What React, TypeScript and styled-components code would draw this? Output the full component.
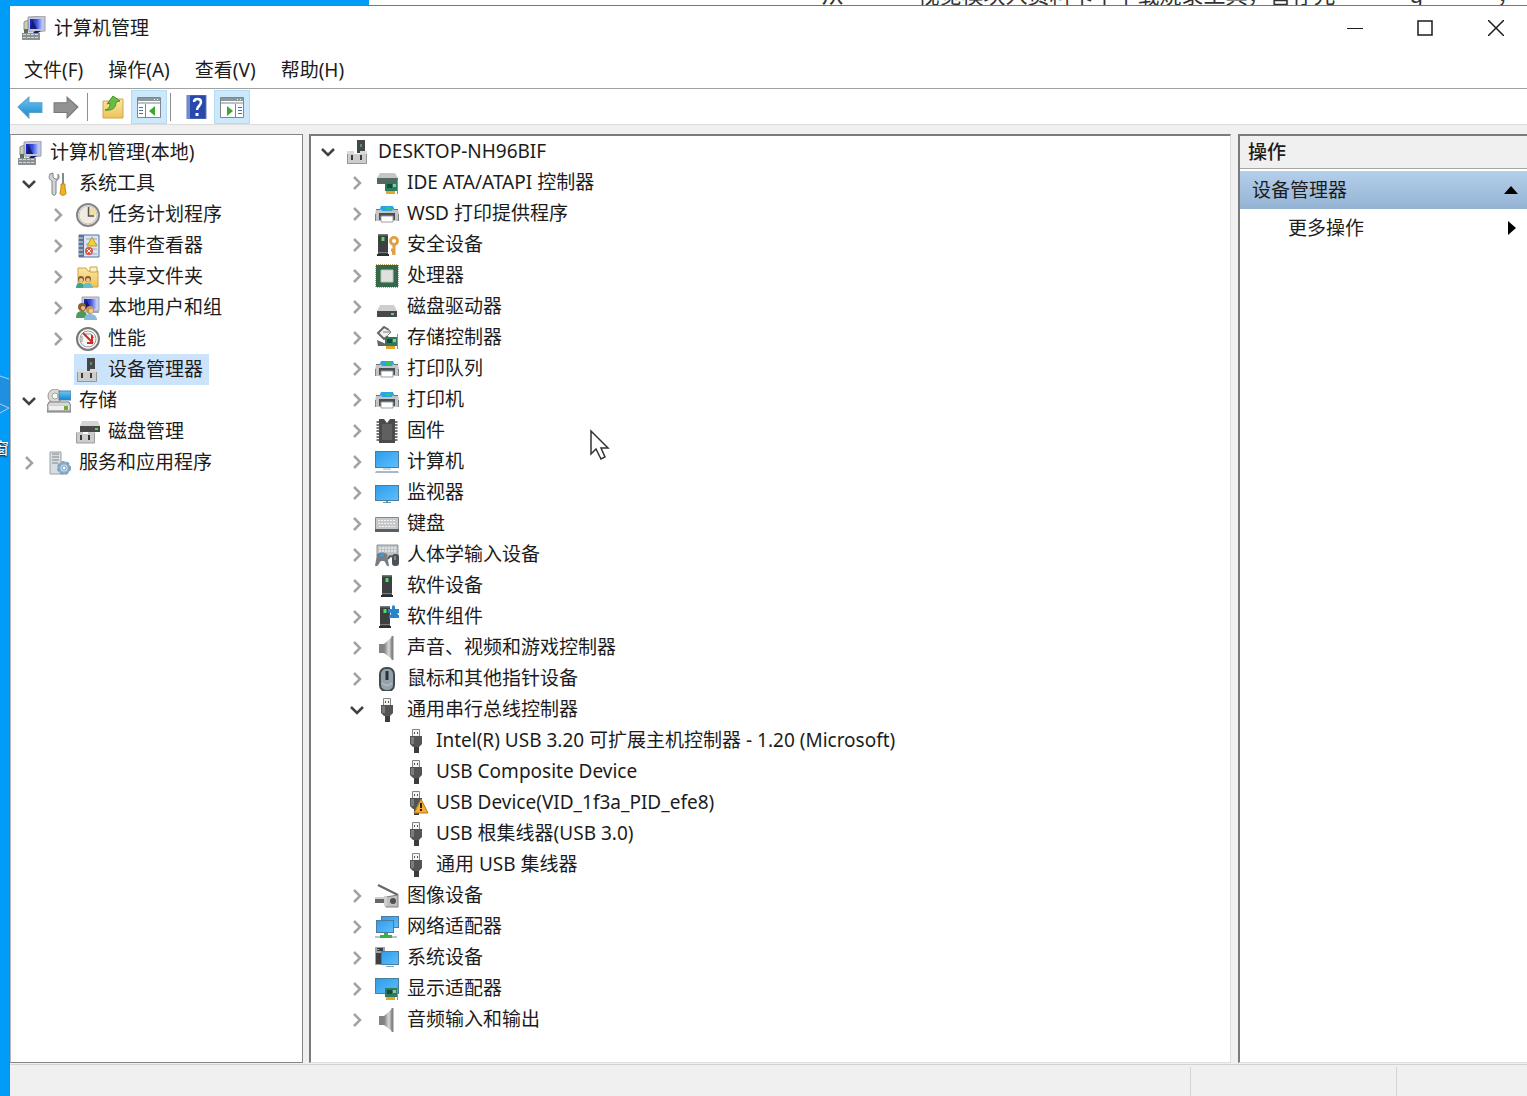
import React, { useState } from "react";
import styled, { createGlobalStyle } from "styled-components";

const GlobalStyle = createGlobalStyle`
  * { box-sizing: border-box; }
  body {
    margin: 0;
    background: #009cf8;
    color: #1c1c1c;
    font: 19px/31px "Noto Sans", "Noto Sans CJK SC", sans-serif;
  }
  button { font: inherit; color: inherit; border: 0; background: none; padding: 0; margin: 0; }
  ul { list-style: none; margin: 0; padding: 0; }
`;

/* ---------- icons ---------- */

const Svg = ({ size = 24, children }: { size?: number; children: React.ReactNode }) => (
  <svg width={size} height={size} viewBox="0 0 24 24" fill="none" aria-hidden="true">
    {children}
  </svg>
);

const HiddenDefs = styled.svg`
  position: absolute;
`;

const Gradients = () => (
  <HiddenDefs width="0" height="0" aria-hidden="true">
    <defs>
      <linearGradient id="screen" x1="0" y1="0" x2="1" y2="1">
        <stop offset="0" stopColor="#2f9be8" />
        <stop offset="1" stopColor="#5cc0ff" />
      </linearGradient>
      <linearGradient id="royal" x1="0" y1="0" x2="1" y2="0">
        <stop offset="0" stopColor="#1420b8" />
        <stop offset="0.5" stopColor="#3c4ee0" />
        <stop offset="1" stopColor="#c4d4ff" />
      </linearGradient>
      <linearGradient id="steel" x1="0" y1="0" x2="1" y2="0">
        <stop offset="0" stopColor="#7d7d7d" />
        <stop offset="0.6" stopColor="#d8d8d8" />
        <stop offset="1" stopColor="#8a8a8a" />
      </linearGradient>
      <linearGradient id="lid" x1="0" y1="0" x2="0" y2="1">
        <stop offset="0" stopColor="#e4e4e4" />
        <stop offset="1" stopColor="#a9a9a9" />
      </linearGradient>
      <linearGradient id="folder" x1="0" y1="0" x2="0" y2="1">
        <stop offset="0" stopColor="#fbe6a2" />
        <stop offset="1" stopColor="#edc35a" />
      </linearGradient>
      <linearGradient id="sky" x1="0" y1="0" x2="0" y2="1">
        <stop offset="0" stopColor="#6cc7f4" />
        <stop offset="1" stopColor="#1586cf" />
      </linearGradient>
    </defs>
  </HiddenDefs>
);

const Card = () => (
  <>
    <path d="M10 11h12v9H10z" fill="#2f7a5c" />
    <path d="M12 13h5v4h-5z" fill="#1b4a38" />
    <path d="M18 13h3v3h-3z" fill="#7fc9a4" />
    <path d="M11 20h9v3h-9z" fill="#e2a62b" />
    <path d="M22.500 8v15" stroke="#8d8d8d" strokeWidth="1" />
  </>
);

const Tower = ({ x = 7 }: { x?: number }) => (
  <g transform={`translate(${x} 0)`}>
    <path d="M1 1h10v20H1z" fill="#3d3f40" />
    <path d="M1 1h10v1.500H1z" fill="#75787a" />
    <path d="M4.500 4h3v4h-3z" fill="#4be060" />
    <path d="M0 21h12v2H0z" fill="#2c2d2e" />
    <path d="M1 19.500h10" stroke="#7a7a7a" />
  </g>
);

const Ports = () => (
  <>
    <path d="M1 14h20v10H1z" fill="#cdcdcd" />
    <path d="M1 11h7v3H1zM14 11h7v3h-7z" fill="#dadada" />
    <path d="M1.500 14v9.500h19V14" stroke="#979797" />
    <path d="M5 15h2v5H5zM14 15h2v5h-2z" fill="#3a3a3a" />
  </>
);

const Monitor = ({ x = 0, y = 3, w = 24, h = 15 }: { x?: number; y?: number; w?: number; h?: number }) => (
  <rect x={x + 0.5} y={y + 0.5} width={w - 1} height={h - 1} fill="url(#screen)" stroke="#4d7c9d" />
);

const Users = () => (
  <>
    <circle cx="6" cy="11" r="4" fill="#8d6231" />
    <circle cx="7" cy="12" r="2" fill="#e9c08d" />
    <path d="M0 22c0-5 2-7 6-7s5 2 5 7z" fill="#4d9b5c" />
    <circle cx="14" cy="14" r="4" fill="#c9954f" />
    <circle cx="15" cy="15" r="2" fill="#f2d0a0" />
    <path d="M8 24c0-4 2-6 6-6s7 2 7 6z" fill="#8db9dc" />
  </>
);

const icons: Record<string, React.ReactNode> = {
  manage: (
    <>
      <path d="M2 6l4-2v10H2z" fill="#cfcfc0" stroke="#8d8d80" />
      <path d="M6 1l17-1v15l-16 1z" fill="#c3c6d6" stroke="#9b9fb0" strokeWidth="1" />
      <path d="M8 3h13v10H8z" fill="url(#royal)" />
      <path d="M10 3l5 10H9zM13 15h6l-3 2h-5z" fill="#141c6c" />
      <path d="M0 17h18v7H0z" fill="#8c9294" />
      <path d="M1 18.500h16M1 21.500h16" stroke="#d2d6d8" strokeDasharray="3 1" />
      <path d="M2 13h4v4H2z" fill="#59705b" />
    </>
  ),
  tools: (
    <>
      <path d="M3 2c-2 4 0 6 2 7v12c0 3 4 3 4 0V9c3-1 4-5 2-7v5H8L6 5V1z" fill="#cfd3d6" stroke="#7f8487" />
      <path d="M16 1v12" stroke="#85898c" strokeWidth="2" />
      <path d="M14 12h4v4l1 5c0 3-6 3-6 0l1-5z" fill="#f3b320" stroke="#c08a1a" strokeWidth="1" />
    </>
  ),
  clock: (
    <>
      <circle cx="12" cy="12" r="11" fill="#f1ecdf" stroke="#858585" strokeWidth="2" />
      <circle cx="12" cy="12" r="9" stroke="#c6c6c6" strokeWidth="1" />
      <path d="M12 12V4a8 8 0 0 1 8 8z" fill="#f2dda4" />
      <path d="M12.500 4v9H18" stroke="#54575a" strokeWidth="1.500" />
    </>
  ),
  events: (
    <>
      <path d="M3 1h20v22H3z" fill="#d8e5f4" stroke="#55709b" />
      <path d="M3 1h5v22H3z" fill="#5d7291" />
      <path d="M2 4h5M2 8h5M2 12h5M2 16h5M2 20h5" stroke="#d9dfe7" />
      <path d="M10 5h11M10 10h11M10 15h11M10 20h11" stroke="#93acd0" />
      <path d="M16 3l5 9H11z" fill="#f0cf3b" stroke="#c49c1a" />
      <circle cx="13" cy="17" r="4" fill="#df5547" />
      <path d="M11 15l4 4m0-4l-4 4" stroke="#fff" />
    </>
  ),
  share: (
    <>
      <path d="M2 3h8l2 3h10v16H2z" fill="url(#folder)" stroke="#cba248" />
      <path d="M14 2h7v5h-7z" fill="#fff3c5" stroke="#cba248" />
      <circle cx="5" cy="14" r="3" fill="#7e5a2f" />
      <circle cx="12" cy="14" r="3" fill="#7e5a2f" />
      <circle cx="5" cy="15" r="2" fill="#efc597" />
      <circle cx="12" cy="15" r="2" fill="#efc597" />
      <path d="M0 23c0-4 2-5 4-5s4 1 5 5z" fill="#3da58b" />
      <path d="M7 23c0-4 2-5 5-5s4 1 5 5z" fill="#68bdc7" />
    </>
  ),
  users: (
    <>
      <path d="M6 1h17v14H6z" fill="#c9cddd" stroke="#9fa4b7" />
      <path d="M8 3h13v10H8z" fill="url(#royal)" />
      <path d="M10 3l5 10H9z" fill="#141c6c" />
      <path d="M14 15h9v2h-9z" fill="#a7a7b1" />
      <Users />
    </>
  ),
  perf: (
    <>
      <circle cx="12" cy="12" r="11" fill="#f6f6f6" stroke="#777" strokeWidth="2" />
      <circle cx="12" cy="12" r="8" stroke="#9c9c9c" strokeWidth="1" />
      <path d="M6 15V9M9 7h6l3 4" stroke="#8a9296" strokeWidth="1" />
      <path d="M7 6l10 10M16 8v8h-5" stroke="#d12a20" strokeWidth="2" />
    </>
  ),
  device: (
    <>
      <path d="M11 0h8v13h-8z" fill="#454748" />
      <path d="M14 4h2v3h-2z" fill="#618b72" />
      <Ports />
    </>
  ),
  storage: (
    <>
      <circle cx="8" cy="7" r="7" fill="#d9d9d3" stroke="#98988f" />
      <circle cx="8" cy="7" r="3" fill="#f7f7f7" stroke="#a5a5a5" />
      <path d="M12 2h12v9H12z" fill="url(#sky)" stroke="#59839b" />
      <path d="M2 13h20l2 4v6H0v-6z" fill="url(#lid)" stroke="#777" />
      <path d="M2 17h20v4H2z" fill="#efefef" />
      <path d="M17 17h4v4h-4z" fill="#6fad32" />
    </>
  ),
  disk: (
    <>
      <path d="M6 1h16l2 5H4z" fill="#d4d4d4" />
      <path d="M4 6h20v6H4z" fill="#464849" />
      <path d="M19 8h3v2h-3z" fill="#4fcd67" />
      <path d="M0 12h7v2h5v-2h7v11H0z" fill="#cccccc" />
      <path d="M.5 13v10h18V13" stroke="#9d9d9d" />
      <path d="M4 15h2v5H4zM12 15h2v5h-2z" fill="#3a3a3a" />
    </>
  ),
  services: (
    <>
      <path d="M3 1h11v22H3z" fill="#d7dde0" stroke="#9aa3a8" />
      <path d="M5 3h7M5 6h7M5 9h7M5 12h6" stroke="#7e888e" strokeWidth="1" />
      <circle cx="17" cy="17" r="5" fill="#c8dbea" stroke="#8fadc6" strokeWidth="3" />
      <circle cx="17" cy="17" r="6" stroke="#7d9fbb" strokeWidth="2" strokeDasharray="3 2" />
      <circle cx="17" cy="17" r="2" fill="#fff" stroke="#7d9fbb" />
    </>
  ),
  ide: (
    <>
      <path d="M5 2h15l3 5H2z" fill="#c6c6c6" />
      <path d="M2 7h21v6H2z" fill="#566660" />
      <Card />
    </>
  ),
  printer: (
    <>
      <path d="M6 4h12l2 5H4z" fill="#29a4e8" />
      <path d="M11 5h5v3h-5z" fill="#35c271" />
      <path d="M1 7h5l1 2h10l1-2h5l1 6v6H0v-6z" fill="#c3c6c8" />
      <path d="M1 7.500h4.500m13 0H23" stroke="#6d7173" />
      <path d="M.5 12v7M23.500 12v7" stroke="#7e8284" />
      <path d="M4 11h16v7h-2v-4H6v4H4z" fill="#4b4f51" />
      <path d="M6 14h12v6H6z" fill="#fff" stroke="#9b9fa1" />
    </>
  ),
  security: (
    <>
      <Tower x={2} />
      <circle cx="19" cy="8" r="3.500" stroke="#e0a044" strokeWidth="3" />
      <path d="M19 11v11m0-5h-3m3 3h-2" stroke="#e0a044" strokeWidth="3" />
    </>
  ),
  cpu: (
    <>
      <path d="M1 1h22v22H1z" stroke="#b3a765" strokeWidth="2" strokeDasharray="1 1" />
      <path d="M1 1h22v22H1z" fill="#346849" />
      <path d="M6 6h12v12H6z" fill="#dfe1df" stroke="#b5c7bb" />
    </>
  ),
  drive: (
    <>
      <path d="M5 10h14l3 6H2z" fill="#cfcfcf" />
      <path d="M2 16h20v6H2z" fill="#48494a" />
      <path d="M16 18h3v2h-3z" fill="#58dc65" />
    </>
  ),
  controller: (
    <>
      <path d="M14 4L9 1 3 7l6 6 4-3" fill="#f1f1f1" stroke="#656565" strokeWidth="2" />
      <path d="M8 6h8l-3-3m3 3l-3 3" stroke="#777" />
      <path d="M2 14l9 4v2H3z" fill="#656565" />
      <Card />
    </>
  ),
  firmware: (
    <>
      <path d="M3 2v20M21 2v20" stroke="#777" strokeWidth="3" strokeDasharray="2 1" />
      <path d="M4 0h5l3 4 3-4h5v24H4z" fill="#4b4b4b" />
      <path d="M7 5h10v16H7z" fill="#606060" />
    </>
  ),
  computer: (
    <>
      <Monitor y={1} h={17} />
      <path d="M8 19h8" stroke="#8fb5ca" />
      <path d="M1 21h22l1 2H0z" fill="#aeb5c7" />
    </>
  ),
  monitor: (
    <>
      <Monitor y={4} h={16} />
      <path d="M11 20h2v1h3v1H8v-1h3z" fill="#5d98b5" />
    </>
  ),
  keyboard: (
    <>
      <path d="M.5 5.500h23v13H.5z" fill="#c5c9cc" stroke="#888" />
      <path d="M3 8.500h18M3 11.500h18M4 14.500h16" stroke="#f3f3f3" strokeWidth="1" strokeDasharray="2 1" />
      <path d="M0 17h24v3H0z" fill="#5b5f62" />
    </>
  ),
  hid: (
    <>
      <path d="M2 2h21v11H2z" fill="#bfc3c6" stroke="#909497" />
      <path d="M4 5h17M4 8h17" stroke="#fff" strokeWidth="1" strokeDasharray="2 1" />
      <path d="M2 11c4-2 6-2 10 0l2 12c-3 1-3-4-5-5H6c-2 1-2 6-6 5z" fill="#777d82" />
      <circle cx="7" cy="12" r="2" fill="#3d9be0" />
      <rect x="17" y="11" width="7" height="12" rx="3" fill="#4d5154" />
      <path d="M20 13v4" stroke="#b8bcc0" />
      <path d="M13 16c2-4 3-3 5-2" stroke="#55595c" strokeWidth="2" />
    </>
  ),
  software: <Tower x={6} />,
  component: (
    <>
      <Tower x={4} />
      <path d="M13 4h4c-1-5 4-5 3 0h4v4c-2 0-2 2 0 2v3H14v-3c3 0 3-3-1-2z" fill="#2a84cc" />
    </>
  ),
  speaker: (
    <>
      <path d="M4 8h5v9H4z" fill="#828282" />
      <path d="M9 8l8-7v22l-8-6z" fill="url(#steel)" />
      <path d="M17.500 0v24" stroke="#838383" strokeWidth="2" />
    </>
  ),
  mouse: (
    <>
      <rect x="5" y="1" width="14" height="23" rx="6" fill="#96a2aa" stroke="#444b50" strokeWidth="2" />
      <path d="M12 4v9" stroke="#263039" strokeWidth="3" />
      <path d="M7 16c3 3 7 3 10 0" stroke="#c5cfd5" />
    </>
  ),
  usb: (
    <>
      <path d="M8.500 .5h7v7h-7z" fill="#f4f4f4" stroke="#858585" />
      <path d="M10 3h1v2h-1zM13 3h1v2h-1z" fill="#555" />
      <path d="M6 7h12v8l-3 3H9l-3-3z" fill="#535455" />
      <path d="M7 8h3v7H7z" fill="#7b7c7d" />
      <path d="M10 18h5v6h-5z" fill="#3c3c3c" />
    </>
  ),
  imaging: (
    <>
      <path d="M3 1l20 10" stroke="#666" strokeWidth="2" />
      <path d="M11 13l12-2v12H11z" fill="#c0c0c0" stroke="#808080" />
      <circle cx="18" cy="17" r="3" fill="#505050" />
      <path d="M0 15h9v4H0z" fill="#666" />
      <path d="M0 13h9v2H0zM9 12h3v10H9z" fill="#cfcfcf" />
    </>
  ),
  network: (
    <>
      <Monitor x={6} y={1} w={18} h={12} />
      <Monitor x={1} y={5} w={18} h={13} />
      <path d="M9 18h4v2h4v3H5v-3h4z" fill="#35b34a" />
      <path d="M0 21h5v2H0zM17 21h5v2h-5z" fill="#c0c0c0" />
    </>
  ),
  system: (
    <>
      <path d="M0 1h10v18H0z" fill="#a0a4a6" />
      <path d="M2 2h6v3H2zM1 7h6v11H1z" fill="#3d4143" />
      <path d="M2 3h2v1H2z" fill="#61d674" />
      <Monitor x={6} y={5} w={18} h={14} />
      <path d="M11 20h8v1h-8z" fill="#70aac8" />
    </>
  ),
  display: (
    <>
      <Monitor y={1} h={16} />
      <Card />
    </>
  ),
  back: <path d="M1 12L11 3v5h12v9H11v5z" fill="url(#sky)" stroke="#5c9fc8" />,
  forward: <path d="M23 12L13 3v5H1v9h12v5z" fill="#929292" stroke="#787878" />,
  up: (
    <>
      <path d="M2 6h8l2-2h10v19H2z" fill="url(#folder)" stroke="#cfa64e" />
      <path d="M4 15C9 14 9 10 9 8L6 9l6-8 7 5-4 1c0 6-4 9-11 8z" fill="#69bd43" stroke="#45912a" />
    </>
  ),
  help: (
    <>
      <path d="M3 0h19v24H3z" fill="#2748ad" stroke="#687baf" />
      <path d="M3 0h3v24H3z" fill="#7089d3" />
      <path d="M10 7c0-4 7-4 7 0 0 4-4 4-4 8" stroke="#fff" strokeWidth="2.500" />
      <path d="M11.500 18h3v3h-3z" fill="#fff" />
    </>
  ),
};

const WindowPane = ({ flipped = false }: { flipped?: boolean }) => (
  <Svg>
    <path d="M.5 2.500h23v20H.5z" fill="#fff" stroke="#7d878e" />
    <path d="M1 3h22v3H1z" fill="#8c979e" />
    <path d="M17 4h1v1h-1zM20 4h1v1h-1z" fill="#fff" />
    <path d="M1 8h22" stroke="#b9c2c8" strokeWidth="2" />
    {flipped ? (
      <>
        <path d="M15.500 9v13" stroke="#7d878e" />
        <path d="M18 12.500h4M18 15.500h4M18 18.500h4" stroke="#4a7198" />
        <path d="M7 11l6 5-6 5z" fill="#3fa535" />
      </>
    ) : (
      <>
        <path d="M8.500 9v13" stroke="#7d878e" />
        <path d="M2 12.500h4M2 15.500h4M2 18.500h4" stroke="#4a7198" />
        <path d="M18 11l-6 5 6 5z" fill="#3fa535" />
      </>
    )}
  </Svg>
);

const Warning = () => (
  <svg width="16" height="16" viewBox="0 0 16 16" aria-hidden="true">
    <path d="M8 1l7 14H1z" fill="#f0ac35" stroke="#ba7a1b" />
    <path d="M7 5h2v5H7zM7 11h2v2H7z" fill="#2d220c" />
  </svg>
);

/* ---------- desktop and window frame ---------- */

const Desktop = styled.div`
  position: relative;
  display: flex;
  flex-direction: column;
  min-height: 100vh;
  padding-left: 9px;
  background: #009cf8;
  overflow: hidden;
`;

const Shortcut = styled.div`
  position: absolute;
  left: 0;
  top: 372px;
  display: flex;
  flex-direction: column;
  align-items: flex-end;
  gap: 20px;
  width: 9px;
  overflow: hidden;
  color: #fff;
  font-size: 16px;
  line-height: 24px;
  text-shadow: 0 1px 2px #000;
`;

const Behind = styled.div`
  display: flex;
  justify-content: flex-end;
  height: 5px;
  overflow: hidden;
`;

const BehindPage = styled.div`
  display: flex;
  align-items: flex-end;
  justify-content: flex-end;
  gap: 74px;
  width: calc(100% - 360px);
  padding-right: 8px;
  background: #fff;
  color: #333;
  font-size: 22px;
  line-height: 22px;
  white-space: nowrap;
`;

const Win = styled.main`
  flex: 1;
  display: flex;
  flex-direction: column;
  border-top: 1px solid #6f7a80;
  border-left: 1px solid #4a7ea3;
  background: #fff;
`;

const TitleBar = styled.header`
  display: flex;
  align-items: center;
  height: 44px;
  padding-left: 12px;
`;

const Title = styled.h1`
  flex: 1;
  margin: 0 0 0 8px;
  font-size: 19px;
  font-weight: 400;
`;

const CaptionButton = styled.button`
  display: grid;
  place-items: center;
  width: 70px;
  height: 44px;
  &:last-child { width: 72px; margin-right: -5px; }
`;

const MenuBar = styled.nav`
  display: flex;
  align-items: center;
  gap: 25px;
  height: 39px;
  padding: 2px 0 0 14px;
  border-bottom: 1px solid #a2a2a2;
`;

const Toolbar = styled.div`
  display: flex;
  align-items: center;
  height: 36px;
  padding: 1px 0 0 2px;
  border-bottom: 1px solid #dcdcdc;
`;

const ToolButton = styled.button<{ $on?: boolean }>`
  display: grid;
  place-items: center;
  width: 36px;
  height: 34px;
  background: ${(p) => (p.$on ? "#cce8fb" : "transparent")};
  border: 1px solid ${(p) => (p.$on ? "#b4dcf5" : "transparent")};
`;

const Divider = styled.span`
  width: 1px;
  height: 28px;
  margin: 0 7px 0 3px;
  background: #8f8f8f;
`;

const Workspace = styled.div`
  flex: 1;
  display: grid;
  grid-template-columns: 293px minmax(0, 1fr) 289px;
  gap: 6px;
  padding: 9px 0 1px;
  background: #f0f0f0;
`;

const NavPane = styled.aside`
  border: 1px solid #858585;
  border-left-color: #b5b5b5;
  background: #fff;
  padding: 2px 0;
`;

const DevicePane = styled.section`
  position: relative;
  border: 2px solid #7a7a7a;
  border-right: 1px solid #dedede;
  border-bottom: 1px solid #dedede;
  background: #fff;
  margin-right: 1px;
`;

const ActionPane = styled.aside`
  border: 2px solid #7a7a7a;
  border-right: 0;
  border-bottom: 1px solid #dedede;
  background: #fff;
`;

const Pointer = styled.svg`
  position: absolute;
  left: 279px;
  top: 293px;
`;

/* ---------- trees ---------- */

const Row = styled.div<{ $indent: number }>`
  display: flex;
  align-items: center;
  height: 31px;
  padding-left: ${(p) => p.$indent}px;
`;

const Expander = styled.button`
  display: grid;
  place-items: center;
  width: 20px;
  height: 31px;
  margin-right: 6px;
`;

const NoExpander = styled.span`
  width: 26px;
`;

const Label = styled.button<{ $selected?: boolean }>`
  position: relative;
  display: flex;
  align-items: center;
  gap: 8px;
  height: 31px;
  padding: 0 6px 0 2px;
  white-space: pre;
  background: ${(p) => (p.$selected ? "#cce4fb" : "transparent")};
`;

const Badge = styled.span`
  position: absolute;
  left: 11px;
  top: 11px;
  display: flex;
`;

const Chevron = ({ open }: { open: boolean }) => (
  <svg width="16" height="16" viewBox="0 0 16 16" fill="none" aria-hidden="true">
    {open ? (
      <path d="M2 5l6 6 6-6" stroke="#414141" strokeWidth="2.500" />
    ) : (
      <path d="M5 2l6 6-6 6" stroke="#a3a3a3" strokeWidth="2.500" />
    )}
  </svg>
);

type Node = {
  icon: string;
  text: string;
  open?: boolean;
  leaf?: boolean;
  warn?: boolean;
  kids?: Node[];
};

const navTree: Node[] = [
  {
    icon: "tools",
    text: "系统工具",
    open: true,
    kids: [
      { icon: "clock", text: "任务计划程序" },
      { icon: "events", text: "事件查看器" },
      { icon: "share", text: "共享文件夹" },
      { icon: "users", text: "本地用户和组" },
      { icon: "perf", text: "性能" },
      { icon: "device", text: "设备管理器", leaf: true },
    ],
  },
  { icon: "storage", text: "存储", open: true, kids: [{ icon: "disk", text: "磁盘管理", leaf: true }] },
  { icon: "services", text: "服务和应用程序" },
];

const deviceTree: Node[] = [
  {
    icon: "device",
    text: "DESKTOP-NH96BIF",
    open: true,
    kids: [
      { icon: "ide", text: "IDE ATA/ATAPI 控制器" },
      { icon: "printer", text: "WSD 打印提供程序" },
      { icon: "security", text: "安全设备" },
      { icon: "cpu", text: "处理器" },
      { icon: "drive", text: "磁盘驱动器" },
      { icon: "controller", text: "存储控制器" },
      { icon: "printer", text: "打印队列" },
      { icon: "printer", text: "打印机" },
      { icon: "firmware", text: "固件" },
      { icon: "computer", text: "计算机" },
      { icon: "monitor", text: "监视器" },
      { icon: "keyboard", text: "键盘" },
      { icon: "hid", text: "人体学输入设备" },
      { icon: "software", text: "软件设备" },
      { icon: "component", text: "软件组件" },
      { icon: "speaker", text: "声音、视频和游戏控制器" },
      { icon: "mouse", text: "鼠标和其他指针设备" },
      {
        icon: "usb",
        text: "通用串行总线控制器",
        open: true,
        kids: [
          { icon: "usb", text: "Intel(R) USB 3.20 可扩展主机控制器 - 1.20 (Microsoft)", leaf: true },
          { icon: "usb", text: "USB Composite Device", leaf: true },
          { icon: "usb", text: "USB Device(VID_1f3a_PID_efe8)", leaf: true, warn: true },
          { icon: "usb", text: "USB 根集线器(USB 3.0)", leaf: true },
          { icon: "usb", text: "通用 USB 集线器", leaf: true },
        ],
      },
      { icon: "imaging", text: "图像设备" },
      { icon: "network", text: "网络适配器" },
      { icon: "system", text: "系统设备" },
      { icon: "display", text: "显示适配器" },
      { icon: "speaker", text: "音频输入和输出" },
    ],
  },
];

const TreeNode = ({ node, indent, selected }: { node: Node; indent: number; selected?: string }) => {
  const [open, setOpen] = useState(!!node.open);
  return (
    <li>
      <Row $indent={indent}>
        {node.leaf ? (
          <NoExpander />
        ) : (
          <Expander aria-label={node.text} aria-expanded={open} onClick={() => setOpen(!open)}>
            <Chevron open={open} />
          </Expander>
        )}
        <Label $selected={node.text === selected}>
          <Svg>{icons[node.icon]}</Svg>
          {node.warn && (
            <Badge>
              <Warning />
            </Badge>
          )}
          {node.text}
        </Label>
      </Row>
      {open && node.kids && (
        <ul>
          {node.kids.map((kid) => (
            <TreeNode key={kid.text} node={kid} indent={indent + 29} selected={selected} />
          ))}
        </ul>
      )}
    </li>
  );
};

/* ---------- action pane ---------- */

const ActionHeading = styled.h2`
  margin: 0;
  height: 33px;
  padding-left: 8px;
  border-bottom: 1px solid #a6a6a6;
  background: #f0f0f0;
  font-size: 19px;
  font-weight: 500;
  line-height: 33px;
`;

const ActionGroup = styled.button`
  display: flex;
  align-items: center;
  justify-content: space-between;
  width: 100%;
  height: 38px;
  margin-top: 2px;
  padding: 0 8px 0 12px;
  background: linear-gradient(#b4cfea, #94b3d4);
`;

const ActionItem = styled.button`
  display: flex;
  align-items: center;
  justify-content: space-between;
  width: 100%;
  height: 38px;
  padding: 0 8px 0 48px;
`;

/* ---------- status bar ---------- */

const StatusBar = styled.footer`
  display: grid;
  grid-template-columns: minmax(0, 1fr) 206px 130px;
  height: 32px;
  border-top: 1px solid #d2d2d2;
  background: #f0f0f0;
`;

const StatusCell = styled.span`
  margin: 2px 0 0;
  border-right: 1px solid #d4d4d4;
`;

export default function App() {
  return (
    <Desktop>
      <GlobalStyle />
      <Gradients />
      <Shortcut>
        <svg width="9" height="44" fill="none" aria-hidden="true">
          <path d="M0 4l9 3v30l-9 4z" fill="#1f8fe0" />
          <path d="M0 4l9 3M0 32l9 4-9 5" stroke="#9fd4fa" />
        </svg>
        <span>窗</span>
      </Shortcut>
      <Behind>
        <BehindPage>
          <span>从</span>
          <span>视觉模块入资料卡中下载烧录工具，暂存先</span>
          <span>g</span>
          <span>，</span>
        </BehindPage>
      </Behind>
      <Win>
        <TitleBar>
          <Svg>{icons.manage}</Svg>
          <Title>计算机管理</Title>
          <CaptionButton aria-label="最小化">
            <svg width="16" height="16" stroke="#1c1c1c"><path d="M0 8.500h16" /></svg>
          </CaptionButton>
          <CaptionButton aria-label="最大化">
            <svg width="16" height="16" fill="none" stroke="#1c1c1c" strokeWidth="1.500"><path d="M1 1h14v14H1z" /></svg>
          </CaptionButton>
          <CaptionButton aria-label="关闭">
            <svg width="16" height="16" stroke="#1c1c1c" strokeWidth="1.500"><path d="M0 0l16 16M16 0L0 16" /></svg>
          </CaptionButton>
        </TitleBar>
        <MenuBar>
          <button>文件(F)</button>
          <button>操作(A)</button>
          <button>查看(V)</button>
          <button>帮助(H)</button>
        </MenuBar>
        <Toolbar>
          <ToolButton aria-label="后退"><Svg size={26}>{icons.back}</Svg></ToolButton>
          <ToolButton aria-label="前进"><Svg size={26}>{icons.forward}</Svg></ToolButton>
          <Divider />
          <ToolButton aria-label="上移一级"><Svg>{icons.up}</Svg></ToolButton>
          <ToolButton $on aria-label="控制台树"><WindowPane /></ToolButton>
          <Divider />
          <ToolButton aria-label="帮助"><Svg>{icons.help}</Svg></ToolButton>
          <ToolButton $on aria-label="操作窗格"><WindowPane flipped /></ToolButton>
        </Toolbar>
        <Workspace>
          <NavPane>
            <Row $indent={5}>
              <Label>
                <Svg>{icons.manage}</Svg>
                计算机管理(本地)
              </Label>
            </Row>
            <ul>
              {navTree.map((n) => (
                <TreeNode key={n.text} node={n} indent={8} selected="设备管理器" />
              ))}
            </ul>
          </NavPane>
          <DevicePane>
            <ul>
              {deviceTree.map((n) => (
                <TreeNode key={n.text} node={n} indent={7} />
              ))}
            </ul>
            <Pointer width="20" height="32" viewBox="0 0 20 32" aria-hidden="true">
              <path d="M1 2v23l5-5 5 10 4-2-4-9h7z" fill="#fff" stroke="#333" strokeWidth="1.500" />
            </Pointer>
          </DevicePane>
          <ActionPane>
            <ActionHeading>操作</ActionHeading>
            <ActionGroup>
              设备管理器
              <svg width="16" height="16" aria-hidden="true"><path d="M8 4l7 8H1z" fill="#000" /></svg>
            </ActionGroup>
            <ActionItem>
              更多操作
              <svg width="16" height="16" aria-hidden="true"><path d="M5 1l8 7-8 7z" fill="#000" /></svg>
            </ActionItem>
          </ActionPane>
        </Workspace>
        <StatusBar>
          <StatusCell />
          <StatusCell />
        </StatusBar>
      </Win>
    </Desktop>
  );
}
